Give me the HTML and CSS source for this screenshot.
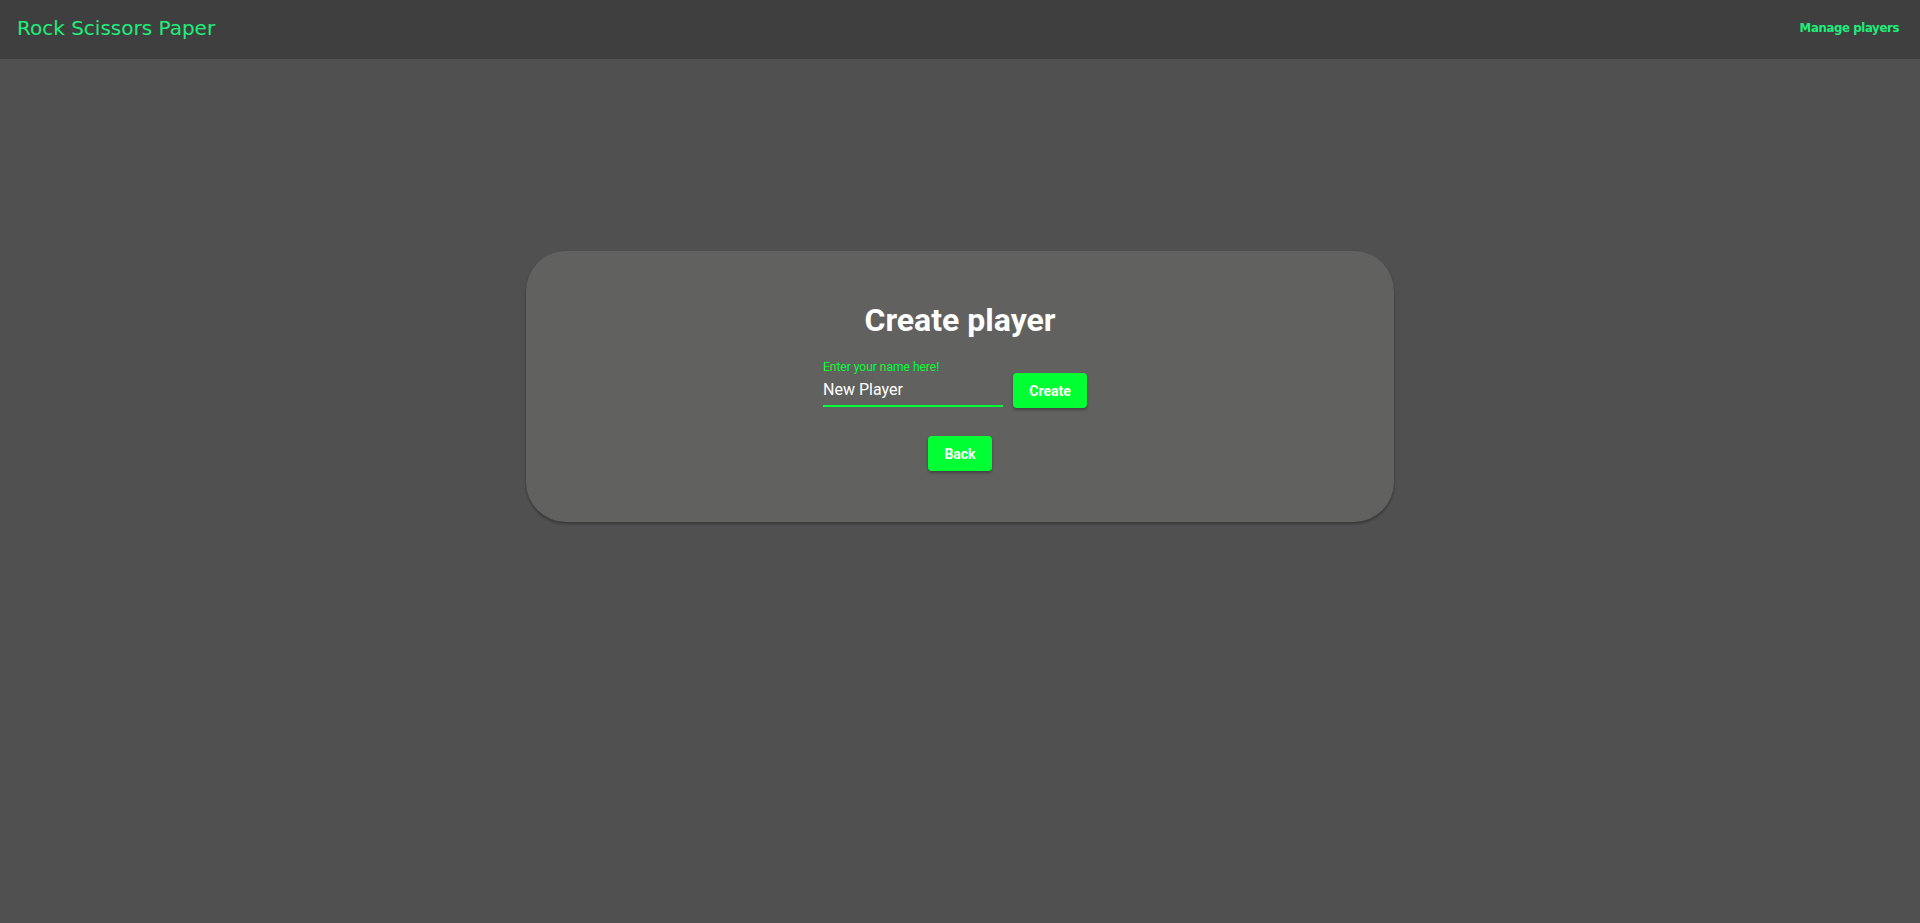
FILE: index.html
```html
<!DOCTYPE html>
<html lang="en">
<head>
<meta charset="utf-8">
<title>Rock Scissors Paper</title>
<link rel="stylesheet" href="styles.css">
</head>
<body>
<header class="topbar">
  <div class="brand">Rock Scissors Paper</div>
  <a class="nav-link" href="#">Manage players</a>
</header>
<main class="page">
  <section class="card">
    <h1 class="card-title">Create player</h1>
    <div class="create-row">
      <label class="field">
        <span class="field-label">Enter your name here!</span>
        <input class="field-input" type="text" value="New Player">
      </label>
      <button class="btn btn-create" type="button">Create</button>
    </div>
    <button class="btn btn-back" type="button">Back</button>
  </section>
</main>
</body>
</html>
```
FILE: styles.css
```css
html, body {
  margin: 0;
  padding: 0;
}
body {
  background: #505050;
  min-height: 923px;
  font-family: Roboto, "Liberation Sans", sans-serif;
}
.topbar {
  height: 59px;
  background: #3f3f3f;
  display: flex;
  align-items: center;
  justify-content: space-between;
  padding: 0 21px 0 17px;
  box-sizing: border-box;
}
.brand {
  font-family: "DejaVu Sans", sans-serif;
  font-size: 20px;
  color: #1eee7a;
  line-height: 24px;
  margin-top: -4px;
}
.nav-link {
  font-family: "DejaVu Sans Condensed", "DejaVu Sans", sans-serif;
  font-weight: bold;
  font-size: 13px;
  letter-spacing: -0.35px;
  color: #1eee7a;
  text-decoration: none;
  margin-top: -4px;
}
.page {
  display: flex;
  justify-content: center;
  padding-top: 192px;
}
.card {
  width: 868px;
  box-sizing: border-box;
  background: #616160;
  border-radius: 40px;
  box-shadow: 0 2px 3px rgba(0, 0, 0, 0.3);
  padding: 50px 0 51px;
  display: flex;
  flex-direction: column;
  align-items: center;
}
.card-title {
  margin: 0;
  font-size: 32px;
  line-height: 38px;
  font-weight: 700;
  color: #ffffff;
}
.create-row {
  display: flex;
  align-items: flex-start;
  gap: 10px;
  margin-top: 21px;
  margin-left: -10px;
}
.field {
  display: flex;
  flex-direction: column;
  width: 180px;
}
.field-label {
  font-size: 12px;
  line-height: 14px;
  color: #00ff33;
  margin-bottom: 1px;
}
.field-input {
  font-family: Roboto, "Liberation Sans", sans-serif;
  font-size: 16px;
  line-height: 20px;
  height: 32px;
  box-sizing: border-box;
  padding: 4px 0 6px;
  border: none;
  border-bottom: 2px solid #00ff33;
  background: transparent;
  color: #ffffff;
  outline: none;
  width: 100%;
}
.btn {
  font-family: Roboto, "Liberation Sans", sans-serif;
  font-weight: 700;
  font-size: 14px;
  color: #ffffff;
  background: #00ff33;
  border: none;
  border-radius: 4px;
  height: 35px;
  padding: 0 16px;
  box-shadow: 0 2px 3px rgba(0, 0, 0, 0.3);
  cursor: pointer;
}
.btn-create {
  margin-top: 13px;
  width: 74px;
}
.btn-back {
  margin-top: 28px;
  width: 64px;
}
```
